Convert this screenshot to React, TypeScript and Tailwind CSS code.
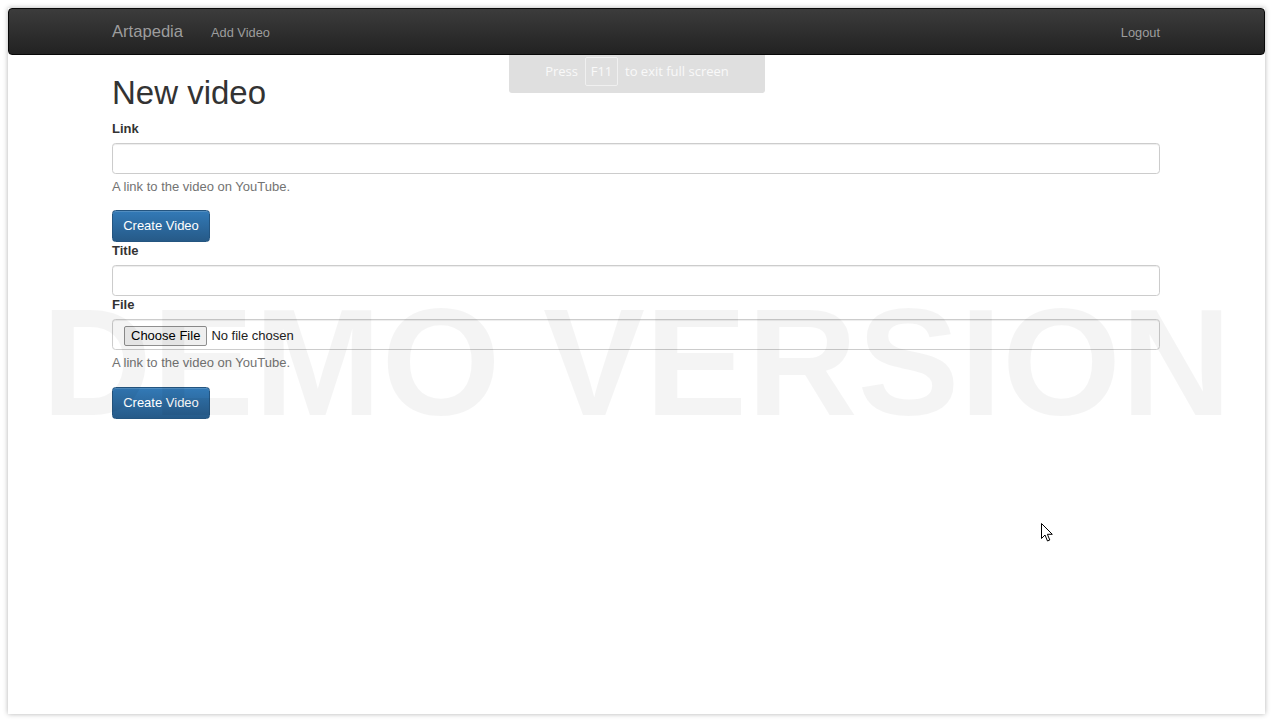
import React from 'react';

const font = "font-['Liberation_Sans',Arial,Helvetica,sans-serif]";

function Cursor() {
  return (
    <svg width="13" height="20" viewBox="0 0 13 20" className="absolute left-[1033px] top-[515px]">
      <path
        d="M0.5 0.5 L0.5 15.5 L4 12 L6.5 18 L8.8 17 L6.4 11.3 L11.3 11.3 Z"
        fill="#fff"
        stroke="#000"
        strokeWidth="1"
        strokeLinejoin="miter"
      />
    </svg>
  );
}

function FullscreenNotice() {
  return (
    <div className="absolute left-[501px] top-[47px] z-30 flex h-[38px] w-[256px] items-start justify-center gap-[7px] rounded-b-[3px] bg-[#dfdfdf] pt-[2px] font-['Open_Sans','Noto_Sans',sans-serif] text-[13px] text-[#f9f9f9]">
      <span className="leading-[29px]">Press</span>
      <span className="flex h-[29px] w-[33px] items-center justify-center rounded-[2px] border border-[#f0f0f0]">
        F11
      </span>
      <span className="leading-[29px]">to exit full screen</span>
    </div>
  );
}

function CreateButton() {
  return (
    <button className="h-[32px] w-[98px] rounded-[3.6px] border border-[#245580] bg-gradient-to-b from-[#337ab7] to-[#265a88] text-[13px] text-white shadow-[inset_0_1px_0_rgba(255,255,255,0.15)]">
      Create Video
    </button>
  );
}

export default function App() {
  return (
    <div className={`h-[722px] w-full overflow-hidden bg-white ${font}`}>
      <div className="relative mx-[8px] mt-[8px] h-[706px] overflow-hidden bg-white shadow-[0_0_5px_rgba(0,0,0,0.3)]">
        {/* Navbar */}
        <nav className="flex h-[47px] items-center justify-between rounded-[4px] border border-[#080808] bg-gradient-to-b from-[#3c3c3c] to-[#222222] pl-[103px] pr-[104px] pt-[2px] text-[#9d9d9d]">
          <div className="flex items-center">
            <span className="pr-[14px] text-[16.6px]">Artapedia</span>
            <span className="pl-[14px] text-[12.8px]">Add Video</span>
          </div>
          <span className="text-[12.8px]">Logout</span>
        </nav>

        {/* Content */}
        <main className="flex flex-col pl-[104px] pr-[105px] text-[13px] leading-[18px] text-[#333]">
          <h1 className="mb-[10px] mt-[20px] text-[33px] leading-[35px]">New video</h1>

          <form className="flex flex-col">
            <label className="mb-[5px] font-bold">Link</label>
            <input
              type="text"
              className="h-[31px] w-full rounded-[3.6px] border border-[#cccccc] bg-transparent px-[11px] shadow-[inset_0_1px_1px_rgba(0,0,0,0.075)] outline-none"
            />
            <p className="mb-[14px] mt-[4px] text-[#737373]">A link to the video on YouTube.</p>
            <div>
              <CreateButton />
            </div>
          </form>

          <form className="flex flex-col">
            <label className="mb-[5px] font-bold">Title</label>
            <input
              type="text"
              className="h-[31px] w-full rounded-[3.6px] border border-[#cccccc] bg-transparent px-[11px] shadow-[inset_0_1px_1px_rgba(0,0,0,0.075)] outline-none"
            />
            <label className="mb-[5px] font-bold">File</label>
            <div className="flex h-[31px] w-full items-center rounded-[3.6px] border border-[#cccccc] px-[11px] pt-[3px] shadow-[inset_0_1px_1px_rgba(0,0,0,0.075)]">
              <input
                type="file"
                className="text-[13px] text-[#222] file:mr-[4px] file:h-[20px] file:rounded-[2px] file:border file:border-[#8f8f8f] file:bg-[#efefef] file:px-[6px] file:text-[13px] file:text-black"
              />
            </div>
            <p className="mb-[15px] mt-[4px] text-[#737373]">A link to the video on YouTube.</p>
            <div>
              <CreateButton />
            </div>
          </form>
        </main>

        {/* Watermark */}
        <div className="pointer-events-none absolute left-0 right-0 top-[277px] z-20 text-center text-[153px] font-bold leading-none text-[rgba(0,0,0,0.045)]">
          <span className="relative left-[0px]">DEMO VERSION</span>
        </div>

        <FullscreenNotice />
        <Cursor />
      </div>
    </div>
  );
}
